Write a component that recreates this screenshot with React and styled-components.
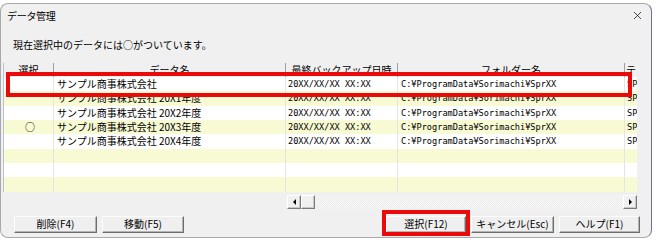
import React from "react";
import styled, { createGlobalStyle } from "styled-components";
import { X } from "lucide-react";

const GlobalStyle = createGlobalStyle`
  body {
    margin: 0;
    background: #ffffff;
    font-family: "Noto Sans CJK JP", "Noto Sans", sans-serif;
    color: #000;
  }
`;

const Page = styled.div`
  padding-top: 3px;
  width: 657px;
  height: 248px;
  box-sizing: border-box;
`;

const Window = styled.div`
  width: 652px;
  height: 235px;
  box-sizing: border-box;
  background: #f0f0f0;
  border: 1px solid #a9a9a9;
  border-right-color: #6f6f9a;
  border-radius: 8px;
  display: flex;
  flex-direction: column;
  overflow: hidden;
`;

const TitleBar = styled.div`
  height: 22px;
  display: flex;
  align-items: center;
  justify-content: space-between;
  padding: 0 6px 0 6px;
  font-size: 10px;
  letter-spacing: -0.3px;
`;

const CloseBtn = styled.span`
  display: flex;
  align-items: center;
  margin-right: 1px;
`;

const Message = styled.div`
  padding: 12px 0 0 12px;
  font-size: 10px;
  line-height: 14px;
  height: 14px;
`;

const Grid = styled.div`
  position: relative;
  margin: 11px 0 0 2px;
  width: 634px;
  display: flex;
  flex-direction: column;
  overflow: hidden;
`;

const Body = styled.div`
  display: flex;
  flex-direction: column;
  border-left: 1px solid #b9c3cf;
`;

const cols = "50px 232px 112px 227px 13px";

const HeaderRow = styled.div`
  display: grid;
  grid-template-columns: ${cols};
  height: 14px;
  overflow: hidden;
`;

const HeadCell = styled.div`
  border-right: 1px solid #a0a0a0;
  font-size: 10px;
  line-height: 14px;
  text-align: center;
  white-space: nowrap;
  overflow: hidden;
`;

const Row = styled.div`
  display: grid;
  grid-template-columns: ${cols};
  height: 14.33px;
  background: ${(p) => (p.$alt ? "#f7fad2" : "#ffffff")};
`;

const Cell = styled.div`
  border-right: 1px solid #e4e4e4;
  padding-left: ${(p) => p.$pad || 3}px;
  font-size: ${(p) => (p.$mono ? "8.6px" : "10px")};
  font-family: ${(p) =>
    p.$mono
      ? '"DejaVu Sans Mono", "Noto Sans CJK JP", monospace'
      : '"Noto Sans CJK JP", sans-serif'};
  text-align: ${(p) => (p.$center ? "center" : "left")};
  line-height: 14px;
  white-space: nowrap;
  overflow: hidden;
`;

const Mark = styled.div`
  position: absolute;
  border: 4px solid #ea0a0a;
  box-sizing: border-box;
  pointer-events: none;
`;

const RowMark = styled(Mark)`
  left: 3px;
  top: 9px;
  width: 626px;
  height: 25px;
`;

const ScrollRow = styled.div`
  display: flex;
  margin: 3px 0 0 284px;
  height: 14px;
`;

const ScrollBtn = styled.div`
  width: 14px;
  height: 14px;
  box-sizing: border-box;
  background: #f0f0f0;
  border: 1px solid;
  border-color: #ffffff #7a7a7a #7a7a7a #ffffff;
  box-shadow: inset -1px -1px 0 #c8c8c8;
  display: flex;
  align-items: center;
  justify-content: center;
`;

const Track = styled.div`
  flex: 0 0 308px;
  background: repeating-conic-gradient(#f7f7f7 0 25%, #ececec 0 50%) 0 0 / 2px 2px;
`;

const Arrow = styled.span`
  width: 0;
  height: 0;
  border-top: 3px solid transparent;
  border-bottom: 3px solid transparent;
  ${(p) =>
    p.$dir === "left"
      ? "border-right: 3px solid #000;"
      : "border-left: 3px solid #000;"}
`;

const ButtonBar = styled.div`
  display: flex;
  justify-content: space-between;
  padding: 7px 11px 0 13px;
`;

const Group = styled.div`
  display: flex;
  gap: 5px;
`;

const Button = styled.button`
  position: relative;
  width: ${(p) => p.$w}px;
  height: 17px;
  padding: 0;
  box-sizing: border-box;
  background: #efefef;
  border: 1px solid;
  border-color: #fdfdfd #6d6d6d #6d6d6d #fdfdfd;
  box-shadow: inset -1px -1px 0 #b4b4b4;
  font-family: "Noto Sans CJK JP", sans-serif;
  font-size: 10px;
  line-height: 14px;
  color: #000;
`;

const ButtonMark = styled(Mark)`
  left: -5px;
  right: -5px;
  top: -7px;
  bottom: -4px;
`;

const rows = [
  { sel: "", name: "サンプル商事株式会社" },
  { sel: "", name: "サンプル商事株式会社 20X1年度" },
  { sel: "", name: "サンプル商事株式会社 20X2年度" },
  { sel: "○", name: "サンプル商事株式会社 20X3年度" },
  { sel: "", name: "サンプル商事株式会社 20X4年度" },
];

export default function App() {
  const all = [...rows, null, null, null];
  return (
    <Page>
      <GlobalStyle />
      <Window>
        <TitleBar>
          <span>データ管理</span>
          <CloseBtn>
            <X size={13} strokeWidth={1.3} />
          </CloseBtn>
        </TitleBar>
        <Message>現在選択中のデータには○がついています。</Message>
        <Grid>
          <Body>
            <HeaderRow>
              <HeadCell>選択</HeadCell>
              <HeadCell>データ名</HeadCell>
              <HeadCell>最終バックアップ日時</HeadCell>
              <HeadCell>フォルダー名</HeadCell>
              <HeadCell>テ</HeadCell>
            </HeaderRow>
            {all.map((r, i) => (
              <Row key={i} $alt={i % 2 === 1}>
                <Cell $center $pad={0}>{r ? r.sel : ""}</Cell>
                <Cell $pad={3}>{r ? r.name : ""}</Cell>
                <Cell $mono $pad={2}>{r ? "20XX/XX/XX XX:XX" : ""}</Cell>
                <Cell $mono $pad={3}>{r ? "C:¥ProgramData¥Sorimachi¥SprXX" : ""}</Cell>
                <Cell $mono $pad={2}>{r ? "SP" : ""}</Cell>
              </Row>
            ))}
          </Body>
          <ScrollRow>
            <ScrollBtn><Arrow $dir="left" /></ScrollBtn>
            <ScrollBtn />
            <Track />
            <ScrollBtn><Arrow $dir="right" /></ScrollBtn>
          </ScrollRow>
          <RowMark />
        </Grid>
        <ButtonBar>
          <Group>
            <Button $w={83}>削除(F4)</Button>
            <Button $w={82}>移動(F5)</Button>
          </Group>
          <Group>
            <Button $w={80}>
              選択(F12)
              <ButtonMark />
            </Button>
            <Button $w={83}>キャンセル(Esc)</Button>
            <Button $w={81}>ヘルプ(F1)</Button>
          </Group>
        </ButtonBar>
      </Window>
    </Page>
  );
}
